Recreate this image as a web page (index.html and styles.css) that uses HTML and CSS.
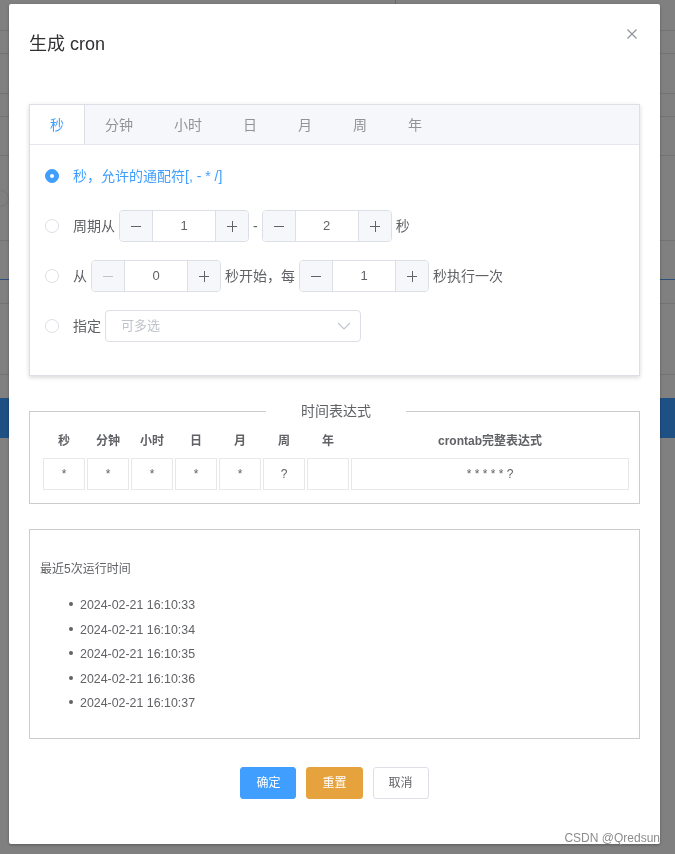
FILE: index.html
```html
<!DOCTYPE html>
<html lang="zh-CN">
<head>
<meta charset="utf-8">
<title>生成 cron</title>
<link rel="stylesheet" href="styles.css">
</head>
<body>
<div class="page">
  <div class="bg-row r1"><div class="bg-col"></div></div>
  <div class="bg-row r2"></div>
  <div class="bg-row r3"></div>
  <div class="bg-row r4"></div>
  <div class="bg-row r5"></div>
  <div class="bg-row r6"><div class="bg-pill"></div></div>
  <div class="bg-row r7"></div>
  <div class="bg-row r8"></div>
  <div class="bg-row r9"></div>
  <div class="bg-gap"></div>
  <div class="bg-blue"></div>
</div>

<div class="overlay">
  <div class="dialog">
    <div class="dialog-header">
      <span class="dialog-title">生成 cron</span>
      <span class="dialog-close">
        <svg width="16" height="16" viewBox="0 0 16 16"><path d="M3.5 3.5 L12.5 12.5 M12.5 3.5 L3.5 12.5" stroke="#909399" stroke-width="1.2" fill="none"/></svg>
      </span>
    </div>

    <div class="dialog-body">
      <div class="tabs">
        <div class="tabs-nav">
          <div class="tab active">秒</div>
          <div class="tab">分钟</div>
          <div class="tab">小时</div>
          <div class="tab">日</div>
          <div class="tab">月</div>
          <div class="tab">周</div>
          <div class="tab">年</div>
        </div>
        <div class="tab-pane">
          <div class="row">
            <span class="radio checked"></span>
            <span class="label active">秒，允许的通配符[, - * /]</span>
          </div>
          <div class="row">
            <span class="radio"></span>
            <span class="label">周期从</span>
            <div class="num">
              <span class="num-btn dec"><svg width="12" height="12" viewBox="0 0 12 12"><path d="M1 6.5 H11" stroke="currentColor" stroke-width="1"/></svg></span>
              <span class="num-val">1</span>
              <span class="num-btn inc"><svg width="12" height="12" viewBox="0 0 12 12"><path d="M1 6.5 H11 M6.5 1 V12" stroke="currentColor" stroke-width="1"/></svg></span>
            </div>
            <span class="label">-</span>
            <div class="num">
              <span class="num-btn dec"><svg width="12" height="12" viewBox="0 0 12 12"><path d="M1 6.5 H11" stroke="currentColor" stroke-width="1"/></svg></span>
              <span class="num-val">2</span>
              <span class="num-btn inc"><svg width="12" height="12" viewBox="0 0 12 12"><path d="M1 6.5 H11 M6.5 1 V12" stroke="currentColor" stroke-width="1"/></svg></span>
            </div>
            <span class="label">秒</span>
          </div>
          <div class="row">
            <span class="radio"></span>
            <span class="label">从</span>
            <div class="num">
              <span class="num-btn dec disabled"><svg width="12" height="12" viewBox="0 0 12 12"><path d="M1 6.5 H11" stroke="currentColor" stroke-width="1"/></svg></span>
              <span class="num-val">0</span>
              <span class="num-btn inc"><svg width="12" height="12" viewBox="0 0 12 12"><path d="M1 6.5 H11 M6.5 1 V12" stroke="currentColor" stroke-width="1"/></svg></span>
            </div>
            <span class="label">秒开始，每</span>
            <div class="num">
              <span class="num-btn dec"><svg width="12" height="12" viewBox="0 0 12 12"><path d="M1 6.5 H11" stroke="currentColor" stroke-width="1"/></svg></span>
              <span class="num-val">1</span>
              <span class="num-btn inc"><svg width="12" height="12" viewBox="0 0 12 12"><path d="M1 6.5 H11 M6.5 1 V12" stroke="currentColor" stroke-width="1"/></svg></span>
            </div>
            <span class="label">秒执行一次</span>
          </div>
          <div class="row">
            <span class="radio"></span>
            <span class="label">指定</span>
            <div class="select">
              <span class="placeholder">可多选</span>
              <svg width="14" height="8" viewBox="0 0 14 8"><path d="M1 1 L7 7 L13 1" stroke="#c0c4cc" stroke-width="1.1" fill="none"/></svg>
            </div>
          </div>
        </div>
      </div>

      <fieldset class="result">
        <legend>时间表达式</legend>
        <table>
          <thead>
            <tr>
              <th class="col">秒</th>
              <th class="col">分钟</th>
              <th class="col">小时</th>
              <th class="col">日</th>
              <th class="col">月</th>
              <th class="col">周</th>
              <th class="col">年</th>
              <th>crontab完整表达式</th>
            </tr>
          </thead>
          <tbody>
            <tr>
              <td><span class="cell star">*</span></td>
              <td><span class="cell star">*</span></td>
              <td><span class="cell star">*</span></td>
              <td><span class="cell star">*</span></td>
              <td><span class="cell star">*</span></td>
              <td><span class="cell">?</span></td>
              <td><span class="cell"></span></td>
              <td><span class="cell expr">* * * * * ?</span></td>
            </tr>
          </tbody>
        </table>
      </fieldset>

      <div class="runs">
        <p class="runs-title">最近5次运行时间</p>
        <ul class="runs-list">
          <li>2024-02-21 16:10:33</li>
          <li>2024-02-21 16:10:34</li>
          <li>2024-02-21 16:10:35</li>
          <li>2024-02-21 16:10:36</li>
          <li>2024-02-21 16:10:37</li>
        </ul>
      </div>
    </div>

    <div class="dialog-footer">
      <button class="btn primary">确定</button>
      <button class="btn warning">重置</button>
      <button class="btn">取消</button>
    </div>
  </div>
</div>

<div class="watermark">CSDN @Qredsun</div>
</body>
</html>
```

FILE: styles.css
```css
* { box-sizing: border-box; }

html, body {
  margin: 0;
  padding: 0;
  height: 100%;
}

body {
  background: #808080;
  font-family: "Liberation Sans", "Noto Sans CJK SC", sans-serif;
  color: #606266;
  overflow: hidden;
}

/* underlying page, seen through the mask */
.page {
  display: flex;
  flex-direction: column;
}
.bg-row {
  border-bottom: 1px solid #737373;
}
.r1 { height: 31px; display: flex; }
.bg-col { width: 396px; border-right: 1px solid #6a6a6a; }
.r2 { height: 23px; }
.r3 { height: 40px; }
.r4 { height: 23px; }
.r5 { height: 39px; }
.r6 { height: 85px; padding-top: 34px; }
.bg-pill {
  width: 40px;
  height: 17px;
  margin-left: -31px;
  border: 1px solid #767676;
  border-radius: 9px;
}
.r7 { height: 39px; border-bottom-color: #2d4f7c; }
.r8 { height: 24px; }
.r9 { height: 71px; }
.bg-gap { height: 23px; }
.bg-blue { height: 40px; background: #1f5084; }

/* mask + dialog */
.overlay {
  position: fixed;
  inset: 0;
}

.dialog {
  width: 651px;
  margin: 4px 0 0 9px;
  background: #fff;
  border-radius: 2px;
  box-shadow: 0 1px 3px rgba(0, 0, 0, 0.3);
}

.dialog-header {
  display: flex;
  justify-content: space-between;
  align-items: flex-start;
  padding: 28px 20px 18px 20px;
}
.dialog-title {
  font-size: 18px;
  line-height: 24px;
  color: #303133;
}
.dialog-close {
  display: block;
  width: 16px;
  height: 16px;
  margin-top: -6px;
}
.dialog-close svg { display: block; }

.dialog-body {
  padding: 30px 20px 0 20px;
}

/* tabs (border card) */
.tabs {
  border: 1px solid #dcdfe6;
  background: #fff;
  box-shadow: 0 2px 4px 0 rgba(0, 0, 0, 0.12), 0 0 6px 0 rgba(0, 0, 0, 0.04);
}
.tabs-nav {
  display: flex;
  height: 40px;
  background: #f5f7fa;
  border-bottom: 1px solid #e4e7ed;
}
.tab {
  height: 39px;
  line-height: 40px;
  padding: 0 20px;
  font-size: 14px;
  color: #909399;
  border-left: 1px solid transparent;
  border-right: 1px solid transparent;
  margin-left: -1px;
}
.tab.active {
  background: #fff;
  color: #409eff;
  border-left-color: #dcdfe6;
  border-right-color: #dcdfe6;
}

.tab-pane {
  padding: 15px;
}
.row {
  display: flex;
  align-items: center;
  gap: 4px;
  height: 32px;
  margin-bottom: 18px;
  font-size: 14px;
  line-height: 20px;
}
.radio {
  width: 14px;
  height: 14px;
  border: 1px solid #dcdfe6;
  border-radius: 50%;
  background: #fff;
  margin-right: 10px;
  flex: none;
  display: flex;
  align-items: center;
  justify-content: center;
}
.radio.checked {
  background: #409eff;
  border-color: #409eff;
}
.radio.checked::after {
  content: "";
  width: 4px;
  height: 4px;
  border-radius: 50%;
  background: #fff;
}
.label { color: #606266; white-space: nowrap; }
.label.active { color: #409eff; }

.num {
  display: flex;
  width: 130px;
  height: 32px;
  border: 1px solid #dcdfe6;
  border-radius: 4px;
  overflow: hidden;
  flex: none;
}
.num-btn {
  width: 33px;
  display: flex;
  align-items: center;
  justify-content: center;
  background: #f5f7fa;
  color: #606266;
}
.num-btn svg { display: block; }
.num-btn.dec { border-right: 1px solid #dcdfe6; }
.num-btn.inc { border-left: 1px solid #dcdfe6; }
.num-btn.disabled { color: #c0c4cc; }
.num-val {
  flex: 1;
  text-align: center;
  font-size: 13px;
  line-height: 30px;
  color: #606266;
}

.select {
  width: 256px;
  height: 32px;
  border: 1px solid #dcdfe6;
  border-radius: 4px;
  display: flex;
  align-items: center;
  justify-content: space-between;
  padding: 0 9px 0 15px;
  flex: none;
}
.placeholder {
  font-size: 13px;
  color: #c0c4cc;
}
.select svg { display: block; }

/* result fieldset */
.result {
  margin: 20px 0 0 0;
  padding: 1px 8px 11px 11px;
  border: 1px solid #ccc;
  min-width: 0;
}
.result legend {
  width: 140px;
  margin: 0 auto;
  padding: 0;
  text-align: center;
  font-size: 14px;
  line-height: 30px;
  color: #606266;
}
.result table {
  width: 100%;
  border-spacing: 2px;
  text-align: center;
}
.result th {
  font-size: 12px;
  line-height: 24px;
  font-weight: bold;
  color: #606266;
  padding: 0 0 3px 0;
}
.result th.col { width: 42px; }
.result td { padding: 0; }
.cell {
  display: block;
  height: 32px;
  line-height: 30px;
  border: 1px solid #e8e8e8;
  font-family: "Liberation Sans", Arial, sans-serif;
  font-size: 12px;
  color: #606266;
  white-space: nowrap;
}

/* recent runs */
.runs {
  margin-top: 25px;
  border: 1px solid #ccc;
  padding: 15px 10px 10px 10px;
  font-size: 12px;
  line-height: 24px;
  color: #606266;
}
.runs-title {
  margin: 12px 0;
}
.runs-list {
  margin: 12px 0;
  padding-left: 40px;
  list-style: none;
}
.runs-list li {
  font-size: 12.4px;
  line-height: 24.5px;
}
.runs-list li::before {
  content: "";
  display: inline-block;
  width: 4px;
  height: 4px;
  border-radius: 50%;
  background: #606266;
  margin-left: -11px;
  margin-right: 7px;
  vertical-align: 3px;
}

/* footer buttons */
.dialog-footer {
  display: flex;
  justify-content: center;
  gap: 10px;
  padding: 28px 20px 45px 20px;
}
.btn {
  height: 32px;
  padding: 9px 15px;
  font-family: "Liberation Sans", "Noto Sans CJK SC", sans-serif;
  font-size: 12px;
  line-height: 12px;
  border-radius: 3px;
  border: 1px solid #dcdfe6;
  background: #fff;
  color: #606266;
}
.btn.primary {
  background: #409eff;
  border-color: #409eff;
  color: #fff;
}
.btn.warning {
  background: #e6a23c;
  border-color: #e6a23c;
  color: #fff;
}

.watermark {
  position: fixed;
  right: 15px;
  bottom: 9px;
  font-size: 12px;
  line-height: 14px;
  color: #8c8c8c;
}
```
